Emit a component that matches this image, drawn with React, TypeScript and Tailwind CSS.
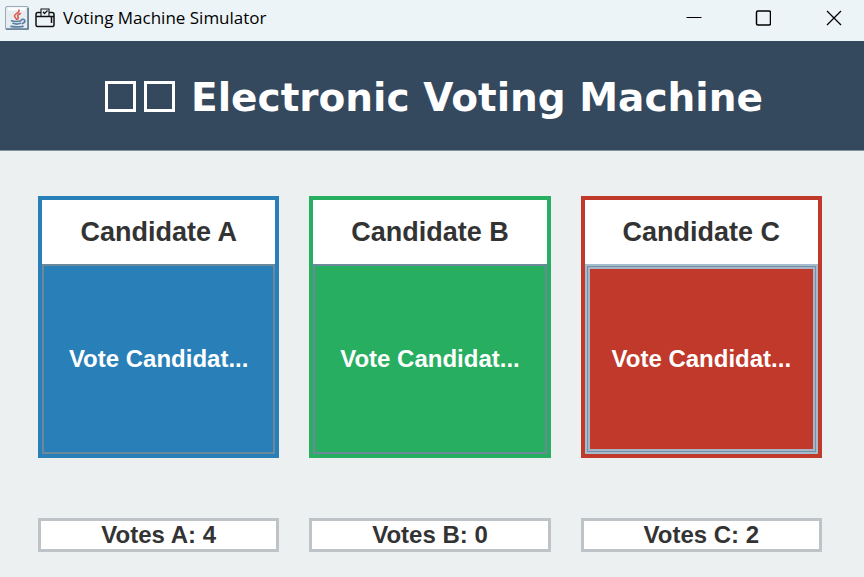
import React, { useState } from 'react';

type CandidateId = 'A' | 'B' | 'C';

const CANDIDATES: { id: CandidateId; card: string; button: string }[] = [
  { id: 'A', card: 'border-[#2980b9]', button: 'bg-[#2980b9]' },
  { id: 'B', card: 'border-[#27ae60]', button: 'bg-[#27ae60]' },
  { id: 'C', card: 'border-[#c0392b]', button: 'bg-[#c0392b]' },
];

const JavaIcon: React.FC = () => (
  <svg width="24" height="24" viewBox="0 0 24 24" fill="none" aria-hidden="true">
    <rect x="0.5" y="0.5" width="23" height="23" rx="1.5" fill="#e6ecf0" stroke="#9aabb9" />
    <path d="M1 23h22V2" stroke="#60798f" strokeWidth="1.6" />
    <path d="M3 3h17" stroke="#fff" strokeWidth="3" />
    <path d="M14 4c1 3-4.500 3.500-4.500 6 0 1.500 2 2 2 3.500M15.500 7.500c-2.500 1-3.500 2-2.500 3.200.8 1 .3 1.800-.6 2.500" stroke="#dc5a50" strokeWidth="1.600" strokeLinecap="round" />
    <path d="M6.500 14.800c2 .8 7 .8 9.500 0M8 17.300c2 .8 5.500.8 7.500 0M16.500 13.500c4-1 4.500 2.500 1 4M6 20.300c3 .6 8 .6 12 0" stroke="#5a7fa3" strokeWidth="1.700" strokeLinecap="round" />
  </svg>
);

const BallotIcon: React.FC = () => (
  <svg width="20" height="20" viewBox="0 0 20 20" fill="none" stroke="#111" aria-hidden="true">
    <path d="M6 4.500H3Q1 4.500 1 6.500V17q0 1.500 1.500 1.500h15q1.500 0 1.500-1.500V6.500q0-2-2-2H14" strokeWidth="1.500" />
    <path d="M1 8.500h18M16.500 9v6" strokeWidth="1.500" />
    <path d="M6 8V1h8v7" strokeWidth="1.100" />
    <path d="M8 3.800l1.500 1.700L12.500 2.500" strokeWidth="1.300" />
  </svg>
);

const TitleBar: React.FC = () => (
  <div className="flex h-[41px] items-center justify-between bg-[#edf4f8] pb-[6px] pl-[5px]">
    <div className="flex items-center">
      <JavaIcon />
      <span className="ml-[6px]"><BallotIcon /></span>
      <span className="ml-2 font-['Open_Sans',sans-serif] text-[17px] leading-6 text-black">Voting Machine Simulator</span>
    </div>
    <div className="flex">
      <button aria-label="Minimize" className="flex h-[35px] w-[69px] items-center justify-center">
        <svg width="16" height="16" viewBox="0 0 16 16"><path d="M0.500 7.500h15" stroke="#000" /></svg>
      </button>
      <button aria-label="Maximize" className="flex h-[35px] w-[69px] items-center justify-center">
        <svg width="16" height="16" viewBox="0 0 16 16" fill="none"><rect x="1.500" y="1" width="14" height="14" rx="1.500" stroke="#000" strokeWidth="1.500" /></svg>
      </button>
      <button aria-label="Close" className="flex h-[35px] w-[67px] items-center justify-center pl-[7px]">
        <svg width="16" height="16" viewBox="0 0 16 16"><path d="M1 1l14 14M15 1L1 15" stroke="#000" strokeWidth="1.300" /></svg>
      </button>
    </div>
  </div>
);

const App: React.FC = () => {
  const [votes, setVotes] = useState<Record<CandidateId, number>>({ A: 4, B: 0, C: 2 });
  const [active, setActive] = useState<CandidateId>('C');

  const vote = (id: CandidateId) => {
    setVotes((prev) => ({ ...prev, [id]: prev[id] + 1 }));
    setActive(id);
  };

  return (
    <div className="min-h-screen bg-[#ecf0f1] font-['Liberation_Sans',Arial,sans-serif]">
      <TitleBar />

      <header className="flex items-center justify-center border-b border-[#8492a0] bg-[#34495e] pt-[33px] pb-7 pl-1 text-white">
        <span className="mr-2 mb-1 size-[31px] border-3 border-white" />
        <span className="mr-4 mb-1 size-[31px] border-3 border-white" />
        <h1 className="font-['DejaVu_Sans',Verdana,sans-serif] text-[39px] leading-12 font-bold whitespace-nowrap">
          Electronic Voting Machine
        </h1>
      </header>

      <main className="pt-[45px] pr-[42px] pb-6 pl-[38px]">
        <div className="grid grid-cols-3 gap-[30px]">
          {CANDIDATES.map(({ id, card, button }) => (
            <section key={id} className={`border-4 bg-white ${card}`}>
              <h2 className="py-4 text-center text-[27px] leading-8 font-bold text-[#333]">Candidate {id}</h2>
              <button
                onClick={() => vote(id)}
                className={`block h-[190px] w-full text-[24px] font-bold text-white outline-none ${button} ${
                  active === id
                    ? 'border-2 border-[#a5bccd] shadow-[inset_0_0_0_1px_#7290aa,inset_0_0_0_3px_#a9b4c4]'
                    : 'border-2 border-[#6c889b]'
                }`}
              >
                Vote Candidat...
              </button>
            </section>
          ))}
        </div>

        <div className="mt-[60px] grid grid-cols-3 gap-[30px]">
          {CANDIDATES.map(({ id }) => (
            <output key={id} className="border-3 border-[#bdc3c7] bg-white text-center text-[24px] leading-7 font-bold text-[#333]">
              Votes {id}: {votes[id]}
            </output>
          ))}
        </div>
      </main>
    </div>
  );
};

export default App;
